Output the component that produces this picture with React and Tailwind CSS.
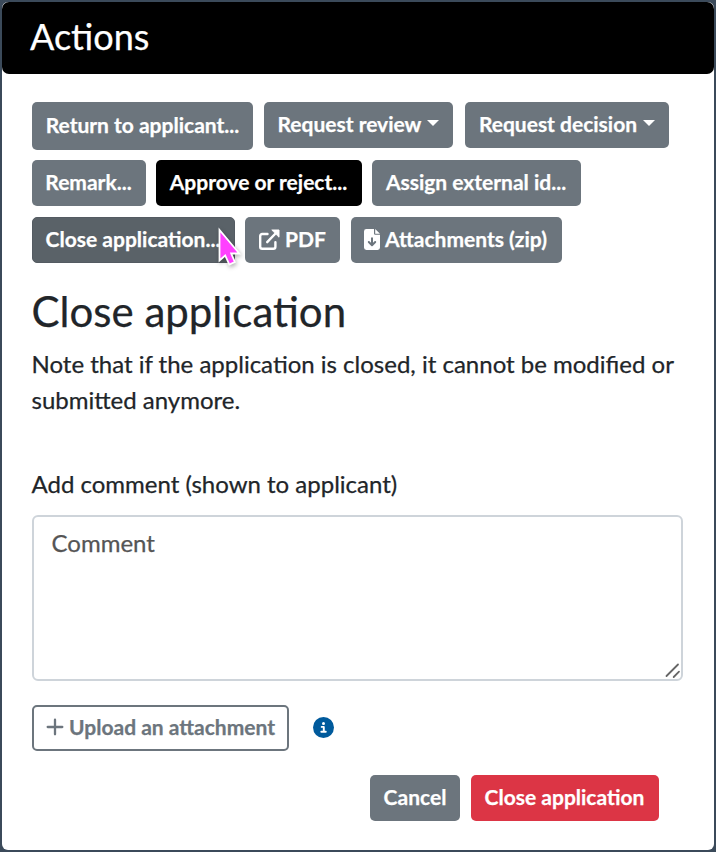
const base = "flex items-center justify-center rounded-[5px] pb-[2px] text-[21px] font-bold leading-[30px] whitespace-nowrap";

function Button({ className, children }) {
  return <button className={`${base} ${className}`}>{children}</button>;
}

function Caret() {
  return <span className="ml-[6px] mb-[2px] border-x-[6px] border-t-[6px] border-x-transparent border-t-white" />;
}

function ExternalIcon() {
  return (
    <svg width="21" height="21" viewBox="0 0 21 21" fill="none" stroke="currentColor" strokeWidth="2.4" strokeLinecap="round" strokeLinejoin="round">
      <path d="M8.5 5H3.2A2 2 0 0 0 1.2 7V17.8A2 2 0 0 0 3.2 19.8H14.4A2 2 0 0 0 16.4 17.8V13.2M8.2 13.2L16.5 4.5" />
      <path d="M13.2 1H20V7.8Z" fill="currentColor" strokeWidth="1" />
    </svg>
  );
}

function FileIcon() {
  return (
    <svg width="16" height="21" viewBox="0 0 16 21" fill="currentColor">
      <path d="M2.4 0H10V4.6A1.2 1.2 0 0 0 11.2 5.8H16V18.6A2.4 2.4 0 0 1 13.6 21H2.4A2.4 2.4 0 0 1 0 18.6V2.4A2.4 2.4 0 0 1 2.4 0ZM11.2 0L16 4.8H11.2Z" />
      <path d="M8 9.2V16M4.8 13L8 16.2L11.2 13" fill="none" stroke="#6c757d" strokeWidth="2" strokeLinecap="round" strokeLinejoin="round" />
    </svg>
  );
}

function PlusIcon() {
  return (
    <svg width="18" height="18" viewBox="0 0 18 18" fill="none" stroke="currentColor" strokeWidth="2.3" strokeLinecap="round">
      <path d="M9 1.7V16.3M1.7 9H16.3" />
    </svg>
  );
}

function InfoIcon() {
  return (
    <svg className="mb-[2px] ml-[24px]" width="21" height="21" viewBox="0 0 21 21">
      <circle cx="10.5" cy="10.5" r="10.5" fill="#005a9c" />
      <circle cx="10.5" cy="6.6" r="1.5" fill="#fff" />
      <path d="M8.7 9.9H10.8V14.7M8.3 14.7H12.8" fill="none" stroke="#fff" strokeWidth="1.9" strokeLinecap="round" strokeLinejoin="round" />
    </svg>
  );
}

function Cursor() {
  return (
    <svg className="absolute left-[180px] top-[8px] drop-shadow-[1px_2px_2px_rgba(0,0,0,0.3)]" width="30" height="42" viewBox="0 0 30 42">
      <path d="M7.5 5V35.5L13.2 30.5L17.3 39.5L22.8 37L19.2 28.5H27.3Z" fill="#ff40ff" stroke="#fff" strokeWidth="1.8" />
    </svg>
  );
}

export default function App() {
  return (
    <div className="flex h-[852px] w-[716px] flex-col bg-[#3b4a5a] p-[2px] font-['Lato',sans-serif] text-[24px] text-[#212529] [-webkit-text-stroke:0.25px]">
      <main className="flex h-[848px] w-[712px] flex-col rounded-[6px] bg-white">
        <h1 className="flex h-[72px] items-center rounded-[7px] bg-black pb-[3px] pl-[28px] text-[36px] leading-[43px] text-white">Actions</h1>
        <div className="flex flex-col pl-[30px] pt-[28px]">
          <div className="flex h-[58px] items-start">
            <Button className="h-[48px] w-[221px] bg-[#6c757d] text-white">Return to applicant...</Button>
            <Button className="ml-[11px] h-[46px] w-[189px] bg-[#6c757d] text-white">Request review<Caret /></Button>
            <Button className="ml-[12px] h-[46px] w-[204px] bg-[#6c757d] text-white">Request decision<Caret /></Button>
          </div>
          <div className="flex h-[57px] items-start">
            <Button className="h-[46px] w-[114px] bg-[#6c757d] pr-[1px] text-white">Remark...</Button>
            <Button className="ml-[10px] h-[46px] w-[206px] bg-black pr-[1px] text-white">Approve or reject...</Button>
            <Button className="ml-[10px] h-[46px] w-[209px] bg-[#6c757d] pr-[1px] text-white">Assign external id...</Button>
          </div>
          <div className="relative flex h-[46px] items-start">
            <Button className="h-[46px] w-[203px] border border-[#545b62] bg-[#5a6268] pr-[1px] text-white">Close application...</Button>
            <Button className="ml-[10px] h-[46px] w-[95px] gap-[5px] bg-[#6c757d] text-white"><ExternalIcon />PDF</Button>
            <Button className="ml-[11px] h-[46px] w-[211px] gap-[5px] bg-[#6c757d] pr-[2px] text-white"><FileIcon />Attachments (zip)</Button>
            <Cursor />
          </div>
          <h2 className="-ml-[0.5px] mt-[23px] text-[42px] leading-[50px]">Close application</h2>
          <p className="-ml-[0.5px] mt-[10px] w-[660px] leading-[36px]">Note that if the application is closed, it cannot be modified or<br />submitted anymore.</p>
          <label className="-ml-[0.5px] mt-[48px] leading-[36px]">Add comment (shown to applicant)</label>
          <div className="relative mt-[13px] h-[166px] w-[651px] rounded-[6px] border-2 border-[#ced4da] pl-[17.5px] pt-[8px] leading-[36px] text-[#555]">
            Comment
            <svg className="absolute bottom-0 right-0" width="20" height="20" viewBox="0 0 20 20" fill="none" stroke="#666" strokeWidth="1.8" strokeLinecap="round"><path d="M5.5 17L17 5.5M12.7 18L18 12.7" /></svg>
          </div>
          <div className="mt-[24px] flex items-center">
            <Button className="h-[46px] w-[257px] gap-[5px] border-2 border-[#6c757d] text-[#6c757d]"><PlusIcon />Upload an attachment</Button>
            <InfoIcon />
          </div>
          <div className="mt-[24px] flex pl-[338px]">
            <Button className="h-[46px] w-[90px] bg-[#6c757d] text-white">Cancel</Button>
            <Button className="ml-[11px] h-[46px] w-[188px] bg-[#dc3545] pr-[1px] text-white">Close application</Button>
          </div>
        </div>
      </main>
    </div>
  );
}
